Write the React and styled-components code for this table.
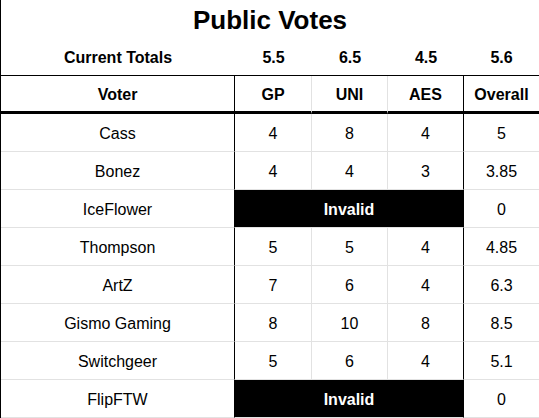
import styled, { createGlobalStyle } from "styled-components";

// ---- GLOBAL ----
const Global = createGlobalStyle`
  html, body { margin: 0; padding: 0; background: #fff; }
  body { font-family: "Liberation Sans", Arial, sans-serif; color: #000; }
`;

// ---- SHEET ----
const Sheet = styled.div`
  width: 539px;
  box-sizing: border-box;
  border-left: 1px solid #000;
  display: grid;
  grid-template-columns: 234px 77px 76px 76px 75px;
  grid-auto-rows: 38px;
`;

const Title = styled.div`
  grid-column: 1 / -1;
  display: flex;
  align-items: center;
  justify-content: center;
  padding-top: 2px;
  font-size: 26px;
  font-weight: 700;
`;

// one cell of the grid; $line picks the bottom rule, $edge the right rule
const Cell = styled.div`
  box-sizing: border-box;
  display: flex;
  align-items: center;
  justify-content: center;
  padding-top: 2px;
  font-size: 16px;
  font-weight: ${(p) => (p.$bold ? 700 : 400)};
  border-bottom: ${(p) =>
    p.$line === "thick"
      ? "3px solid #000"
      : p.$line === "black"
      ? "1px solid #000"
      : p.$line === "none"
      ? "0"
      : "1px solid #e2e2e2"};
  border-right: ${(p) =>
    p.$edge === "black"
      ? "1px solid #000"
      : p.$edge === "grey"
      ? "1px solid #e2e2e2"
      : "0"};
`;

const Invalid = styled(Cell)`
  grid-column: 2 / 5;
  background: #000;
  color: #fff;
  font-weight: 700;
`;

const edges = ["black", "grey", "grey", "black", "none"];

const totals = ["Current Totals", "5.5", "6.5", "4.5", "5.6"];
const heads = ["Voter", "GP", "UNI", "AES", "Overall"];

const votes = [
  ["Cass", 4, 8, 4, 5],
  ["Bonez", 4, 4, 3, "3.85"],
  ["IceFlower", null, null, null, 0],
  ["Thompson", 5, 5, 4, "4.85"],
  ["ArtZ", 7, 6, 4, "6.3"],
  ["Gismo Gaming", 8, 10, 8, "8.5"],
  ["Switchgeer", 5, 6, 4, "5.1"],
  ["FlipFTW", null, null, null, 0],
];

function App() {
  return (
    <>
      <Global />
      <Sheet>
        <Title>Public Votes</Title>

        {totals.map((t, i) => (
          <Cell key={"t" + i} $bold $line="black">
            {t}
          </Cell>
        ))}

        {heads.map((h, i) => (
          <Cell key={"h" + i} $bold $line="thick" $edge={edges[i]}>
            {h}
          </Cell>
        ))}

        {votes.map((row) =>
          row[1] === null ? (
            [
              <Cell key={row[0]} $edge="black">{row[0]}</Cell>,
              <Invalid key={row[0] + "-inv"} $edge="black">Invalid</Invalid>,
              <Cell key={row[0] + "-o"}>{row[4]}</Cell>,
            ]
          ) : (
            row.map((v, i) => (
              <Cell key={row[0] + i} $edge={edges[i]}>
                {v}
              </Cell>
            ))
          )
        )}
      </Sheet>
    </>
  );
}

export default App;
